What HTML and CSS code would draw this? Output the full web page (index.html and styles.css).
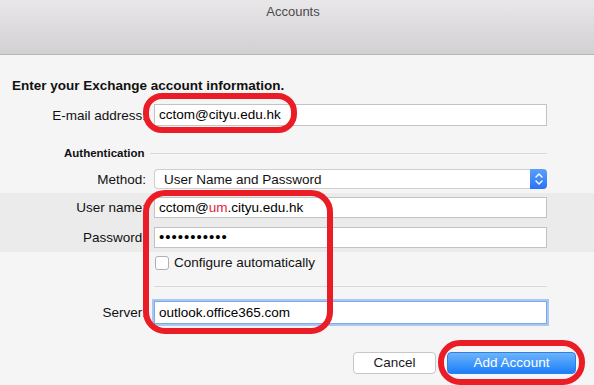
FILE: index.html
```html
<!DOCTYPE html>
<html>
  <head>
    <meta charset="utf-8">
    <title>Accounts</title>
    <meta name="viewport" content="width=device-width, initial-scale=1.0">
    <link rel="stylesheet" href="styles.css">
  </head>
  <body>
    <div id="titlebar">
      <span class="title">Accounts</span>
    </div>

    <div id="sheet">
      <h1>Enter your Exchange account information.</h1>

      <div class="row row_email">
        <label>E-mail address:</label>
        <div class="field">cctom@cityu.edu.hk</div>
      </div>

      <div class="row row_section">
        <span class="section_title">Authentication</span>
        <div class="rule"></div>
      </div>

      <div class="row row_method">
        <label>Method:</label>
        <div class="select">
          <span>User Name and Password</span>
          <div class="stepper">
            <svg width="10" height="14" viewBox="0 0 10 14" fill="none" stroke="white" stroke-width="1.4" stroke-linecap="round" stroke-linejoin="round">
              <path d="M2 5 5 2 8 5"></path><path d="M2 9 5 12 8 9"></path>
            </svg>
          </div>
        </div>
      </div>

      <div id="band">
        <div class="row">
          <label>User name:</label>
          <div class="field">cctom@<span class="hl">um</span>.cityu.edu.hk</div>
        </div>
        <div class="row">
          <label>Password:</label>
          <div class="field dots">•••••••••••</div>
        </div>
      </div>

      <div class="row row_check">
        <span></span>
        <div class="check">
          <span class="box"></span>
          <span>Configure automatically</span>
        </div>
      </div>

      <div class="row row_sep">
        <span></span>
        <div class="rule"></div>
      </div>

      <div class="row row_server">
        <label>Server:</label>
        <div class="field focused">outlook.office365.com</div>
      </div>

      <div id="buttons">
        <div class="btn cancel">Cancel</div>
        <div class="btn primary">Add Account</div>
      </div>
    </div>

    <!-- red annotation marks -->
    <div class="mark mark_email"></div>
    <div class="mark mark_login"></div>
    <div class="mark mark_add"></div>
  </body>
</html>
```

FILE: styles.css
```css
html, body {
  margin: 0;
  padding: 0;
}

body {
  position: relative;
  width: 594px;
  height: 385px;
  overflow: hidden;
  background: #f5f5f5;
  color: #111111;
  font-family: "Liberation Sans", Arial, sans-serif;
  font-size: 13.5px;
}

#titlebar {
  height: 54px;
  border-bottom: 1px solid #b6b4b6;
  background: linear-gradient(#e9e7e9, #d2d0d2);
  padding-right: 8px;
  text-align: center;
}

#titlebar .title {
  display: block;
  padding-top: 4px;
  line-height: 16px;
  font-size: 13px;
  color: #4a4a4a;
}

h1 {
  margin: 23px 0 0 12px;
  font-size: 13.5px;
  line-height: 16px;
  font-weight: bold;
}

.row {
  display: grid;
  grid-template-columns: 146px 393px;
  column-gap: 8px;
  align-items: center;
}

.row label {
  text-align: right;
  white-space: nowrap;
}

.field {
  height: 21px;
  box-sizing: border-box;
  border: 1px solid #c3c3c3;
  background: white;
  padding-left: 4px;
  line-height: 19px;
  color: black;
}

.hl {
  color: #e0243a;
}

.dots {
  font-size: 15px;
  letter-spacing: 1px;
  line-height: 18px;
}

.row_email {
  margin-top: 10px;
}

.row_email .field {
  height: 22px;
  line-height: 20px;
}

.row_section {
  margin-top: 20px;
  height: 14px;
  grid-template-columns: 82px 397px;
  column-gap: 4px;
  padding-left: 64px;
}

.section_title {
  font-size: 11.5px;
  font-weight: bold;
}

.rule {
  height: 1px;
  background: #d9d9d9;
}

.row_method {
  margin-top: 9px;
}

.select {
  display: flex;
  align-items: center;
  justify-content: space-between;
  height: 20px;
  box-sizing: border-box;
  border: 1px solid #cfcfcf;
  border-right: none;
  border-radius: 4px;
  background: white;
  padding-left: 9px;
}

.stepper {
  width: 17px;
  height: 20px;
  border-radius: 0 4px 4px 0;
  background: linear-gradient(#5aa0fa, #2a72f6);
  display: flex;
  align-items: center;
  justify-content: center;
}

.stepper svg {
  display: block;
}

#band {
  margin-top: 4px;
  padding: 4px 0;
  background: #ebebeb;
  display: flex;
  flex-direction: column;
  gap: 9px;
}

.row_check {
  margin-top: 3px;
}

.check {
  display: flex;
  align-items: center;
  gap: 5px;
  padding-left: 1px;
}

.check .box {
  width: 12px;
  height: 12px;
  border: 1px solid #b0b0b0;
  border-radius: 3px;
  background: white;
}

.row_sep {
  margin-top: 16px;
}

.row_server {
  margin-top: 14px;
}

.row_server .field {
  height: 23px;
  line-height: 21px;
  border-color: #7ea9e6;
  box-shadow: 0 0 0 2px #a9c8f1;
}

#buttons {
  margin-top: 28px;
  padding-right: 18px;
  display: flex;
  justify-content: flex-end;
  gap: 11px;
}

.btn {
  height: 22px;
  box-sizing: border-box;
  line-height: 20px;
  text-align: center;
  border-radius: 4px;
}

.cancel {
  width: 83px;
  background: white;
  border: 1px solid #c6c6c6;
  color: #1a1a1a;
}

.primary {
  width: 129px;
  background: linear-gradient(#6db4fb, #1b7ff9);
  border: 1px solid #2f7fe8;
  color: white;
}

.mark {
  position: absolute;
  box-sizing: border-box;
  border: 6px solid #ea1d27;
  border-radius: 19px;
}

.mark_email {
  left: 143px;
  top: 93px;
  width: 154px;
  height: 40px;
}

.mark_login {
  left: 143px;
  top: 190px;
  width: 190px;
  height: 144px;
  border-radius: 22px;
}

.mark_add {
  left: 438px;
  top: 340px;
  width: 147px;
  height: 45px;
  border-radius: 22px;
}
```
